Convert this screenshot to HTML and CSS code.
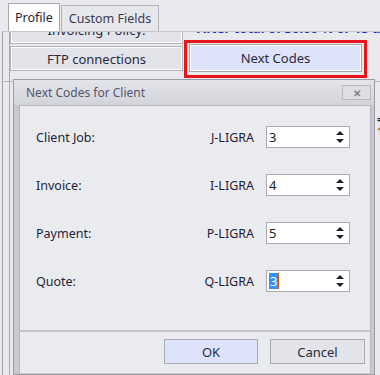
FILE: index.html
```html
<!DOCTYPE html>
<html lang="en">
<head>
    <meta charset="UTF-8">
    <meta name="viewport" content="width=device-width, initial-scale=1.0">
    <title>Next Codes for Client</title>
    <link rel="stylesheet" href="styles.css">
</head>
<body>

<div class="screen">
    <!-- Abas -->
    <div class="tabs">
        <div class="tab active">Profile</div>
        <div class="tab">Custom Fields</div>
    </div>

    <div class="panel">
        <div class="panel-inner">
            <div class="row-cut">
                <div class="btn btn-cut"><span>Invoicing Policy:</span></div>
                <div class="blue-text">After total of 30.00 % or 15 days</div>
            </div>
            <div class="row-btns">
                <div class="btn btn-ftp">FTP connections</div>
                <div class="highlight">
                    <div class="btn btn-next">Next Codes</div>
                </div>
            </div>
            <div class="row-below"></div>
        </div>
        <div class="side-text">
            <span>=</span>
            <span class="orange">1</span>
        </div>
    </div>

    <!-- Janela de diálogo -->
    <div class="dialog">
        <div class="title-bar">
            <span class="title">Next Codes for Client</span>
            <span class="close">&#x2715;</span>
        </div>
        <div class="dialog-body">
            <div class="code-row">
                <span class="label">Client Job:</span>
                <span class="prefix">J-LIGRA</span>
                <div class="spin"><span class="value">3</span><span class="arrows"><i class="up"></i><i class="down"></i></span></div>
            </div>
            <div class="code-row">
                <span class="label">Invoice:</span>
                <span class="prefix">I-LIGRA</span>
                <div class="spin"><span class="value">4</span><span class="arrows"><i class="up"></i><i class="down"></i></span></div>
            </div>
            <div class="code-row">
                <span class="label">Payment:</span>
                <span class="prefix">P-LIGRA</span>
                <div class="spin"><span class="value">5</span><span class="arrows"><i class="up"></i><i class="down"></i></span></div>
            </div>
            <div class="code-row">
                <span class="label">Quote:</span>
                <span class="prefix">Q-LIGRA</span>
                <div class="spin"><span class="value"><span class="selected">3</span><span class="caret"></span></span><span class="arrows"><i class="up"></i><i class="down"></i></span></div>
            </div>
        </div>
        <div class="dialog-footer">
            <div class="btn btn-ok">OK</div>
            <div class="btn btn-cancel">Cancel</div>
        </div>
    </div>
</div>

</body>
</html>
```

FILE: styles.css
```css
body {
    margin: 0;
    padding: 0;
    font-family: 'Noto Sans', 'Open Sans', sans-serif;
    font-size: 12px;
    color: #1e1e38;
    background-color: #e9eaee;
}
.screen {
    position: relative;
    width: 380px;
    height: 375px;
    overflow: hidden;
    background-color: #e9eaee;
}
.tabs {
    display: flex;
    align-items: flex-end;
    height: 31px;
    padding-left: 8px;
    box-sizing: border-box;
}
.tab {
    height: 26px;
    padding: 0 7px;
    display: flex;
    align-items: center;
    font-size: 12.5px;
    color: #3a3a55;
    background-color: #e6e7eb;
    border: 1px solid #b4b5bc;
    border-bottom: none;
    box-sizing: border-box;
    margin-left: 1px;
}
.tab.active {
    height: 28px;
    margin-left: 0;
    padding: 0 6px;
    background-color: #fff;
    color: #1e1e38;
    border-color: #a8a9b0;
}
.panel {
    position: relative;
    margin-left: 2px;
    border-left: 1px solid #9fa0a8;
    border-top: 1px solid #c6c7cd;
    height: 343px;
}
.panel-inner {
    margin-left: 6px;
    border-left: 1px solid #a9aab1;
    height: 100%;
}
.row-cut {
    display: flex;
    height: 12px;
    overflow: hidden;
}
.btn {
    display: flex;
    align-items: center;
    justify-content: center;
    box-sizing: border-box;
    border: 1px solid #b3b4ba;
    background-color: #e3e4e9;
    font-size: 13px;
    color: #2a2a40;
}
.btn-cut {
    flex: none;
    width: 173px;
    height: 28px;
    margin-top: -16px;
    outline: 1px solid #fff;
    outline-offset: -2px;
}
.blue-text {
    margin-top: -13px;
    margin-left: 14px;
    color: #1a2ad0;
    font-weight: bold;
    font-size: 13px;
    white-space: nowrap;
}
.row-btns {
    display: flex;
    align-items: flex-start;
    margin-top: 2px;
}
.btn-ftp {
    flex: none;
    width: 173px;
    height: 25px;
    outline: 1px solid #fff;
    outline-offset: -2px;
}
.highlight {
    flex: none;
    margin-left: 1px;
    margin-top: -6px;
    border: 3px solid #e8141c;
    padding: 1px 2px;
    width: 183px;
    height: 38px;
    box-sizing: border-box;
}
.btn-next {
    width: 173px;
    height: 28px;
    background-color: #dce3fb;
    border-color: #a6a7ad;
    outline: 1px solid #fff;
    outline-offset: -2px;
}
.row-below {
    margin-top: 3px;
    margin-left: -6px;
    border-top: 1px solid #b3b4ba;
}
.side-text {
    position: absolute;
    left: 374px;
    top: 82px;
    display: flex;
    flex-direction: column;
    font-weight: bold;
    font-size: 12px;
    line-height: 12px;
}
.orange {
    color: #c25a00;
}
.dialog {
    position: absolute;
    left: 13px;
    top: 79px;
    width: 362px;
    height: 296px;
    box-sizing: border-box;
    border: 1px solid #9c9da4;
    background-color: #c9cad1;
    padding: 0 3px 1px 5px;
    display: flex;
    flex-direction: column;
}
.title-bar {
    flex: none;
    height: 25px;
    margin: 0 -3px 0 -5px;
    padding: 0 3px 0 12px;
    display: flex;
    align-items: center;
    justify-content: space-between;
    background: linear-gradient(#e4e5ea, #d2d4da);
}
.title {
    color: #555370;
    font-size: 12px;
}
.close {
    width: 27px;
    height: 13px;
    display: flex;
    align-items: center;
    justify-content: center;
    border: 1px solid #b9bac0;
    background-color: #dedfe4;
    color: #7c7d84;
    font-size: 10px;
    font-weight: bold;
}
.dialog-body {
    flex: 1;
    background-color: #eaebef;
    border: 1px solid #b6b7be;
    border-bottom: none;
    padding: 20px 0 0 16px;
    display: flex;
    flex-direction: column;
    gap: 26px;
}
.code-row {
    display: flex;
    align-items: center;
    height: 22px;
}
.label {
    width: 160px;
    font-size: 12.5px;
}
.prefix {
    width: 58px;
    text-align: right;
    font-size: 12.5px;
    margin-right: 12px;
}
.spin {
    width: 84px;
    height: 22px;
    box-sizing: border-box;
    border: 1px solid #abacb3;
    background-color: #fff;
    display: flex;
    align-items: center;
    justify-content: space-between;
    padding: 0 5px 0 2px;
}
.value {
    display: flex;
    align-items: center;
    font-size: 13px;
    color: #222;
}
.selected {
    background-color: #3390ff;
    color: #fff;
    padding: 0 1px;
    line-height: 16px;
}
.caret {
    width: 1px;
    height: 16px;
    background-color: #c05a00;
}
.arrows {
    display: flex;
    flex-direction: column;
    gap: 4px;
}
.arrows i {
    display: block;
    width: 0;
    height: 0;
    border-left: 4px solid transparent;
    border-right: 4px solid transparent;
}
.arrows .up {
    border-bottom: 4px solid #1e1e30;
}
.arrows .down {
    border-top: 4px solid #1e1e30;
}
.dialog-footer {
    flex: none;
    height: 43px;
    box-sizing: border-box;
    background-color: #eaebef;
    border-top: 2px solid #c3c4ca;
    border-left: 1px solid #b6b7be;
    border-right: 1px solid #b6b7be;
    display: flex;
    justify-content: flex-end;
    align-items: flex-start;
    padding: 7px 5px 0 0;
    gap: 12px;
}
.btn-ok, .btn-cancel {
    width: 95px;
    height: 25px;
    border-color: #abacb2;
}
.btn-ok {
    width: 94px;
    background-color: #dce3fb;
}
```
